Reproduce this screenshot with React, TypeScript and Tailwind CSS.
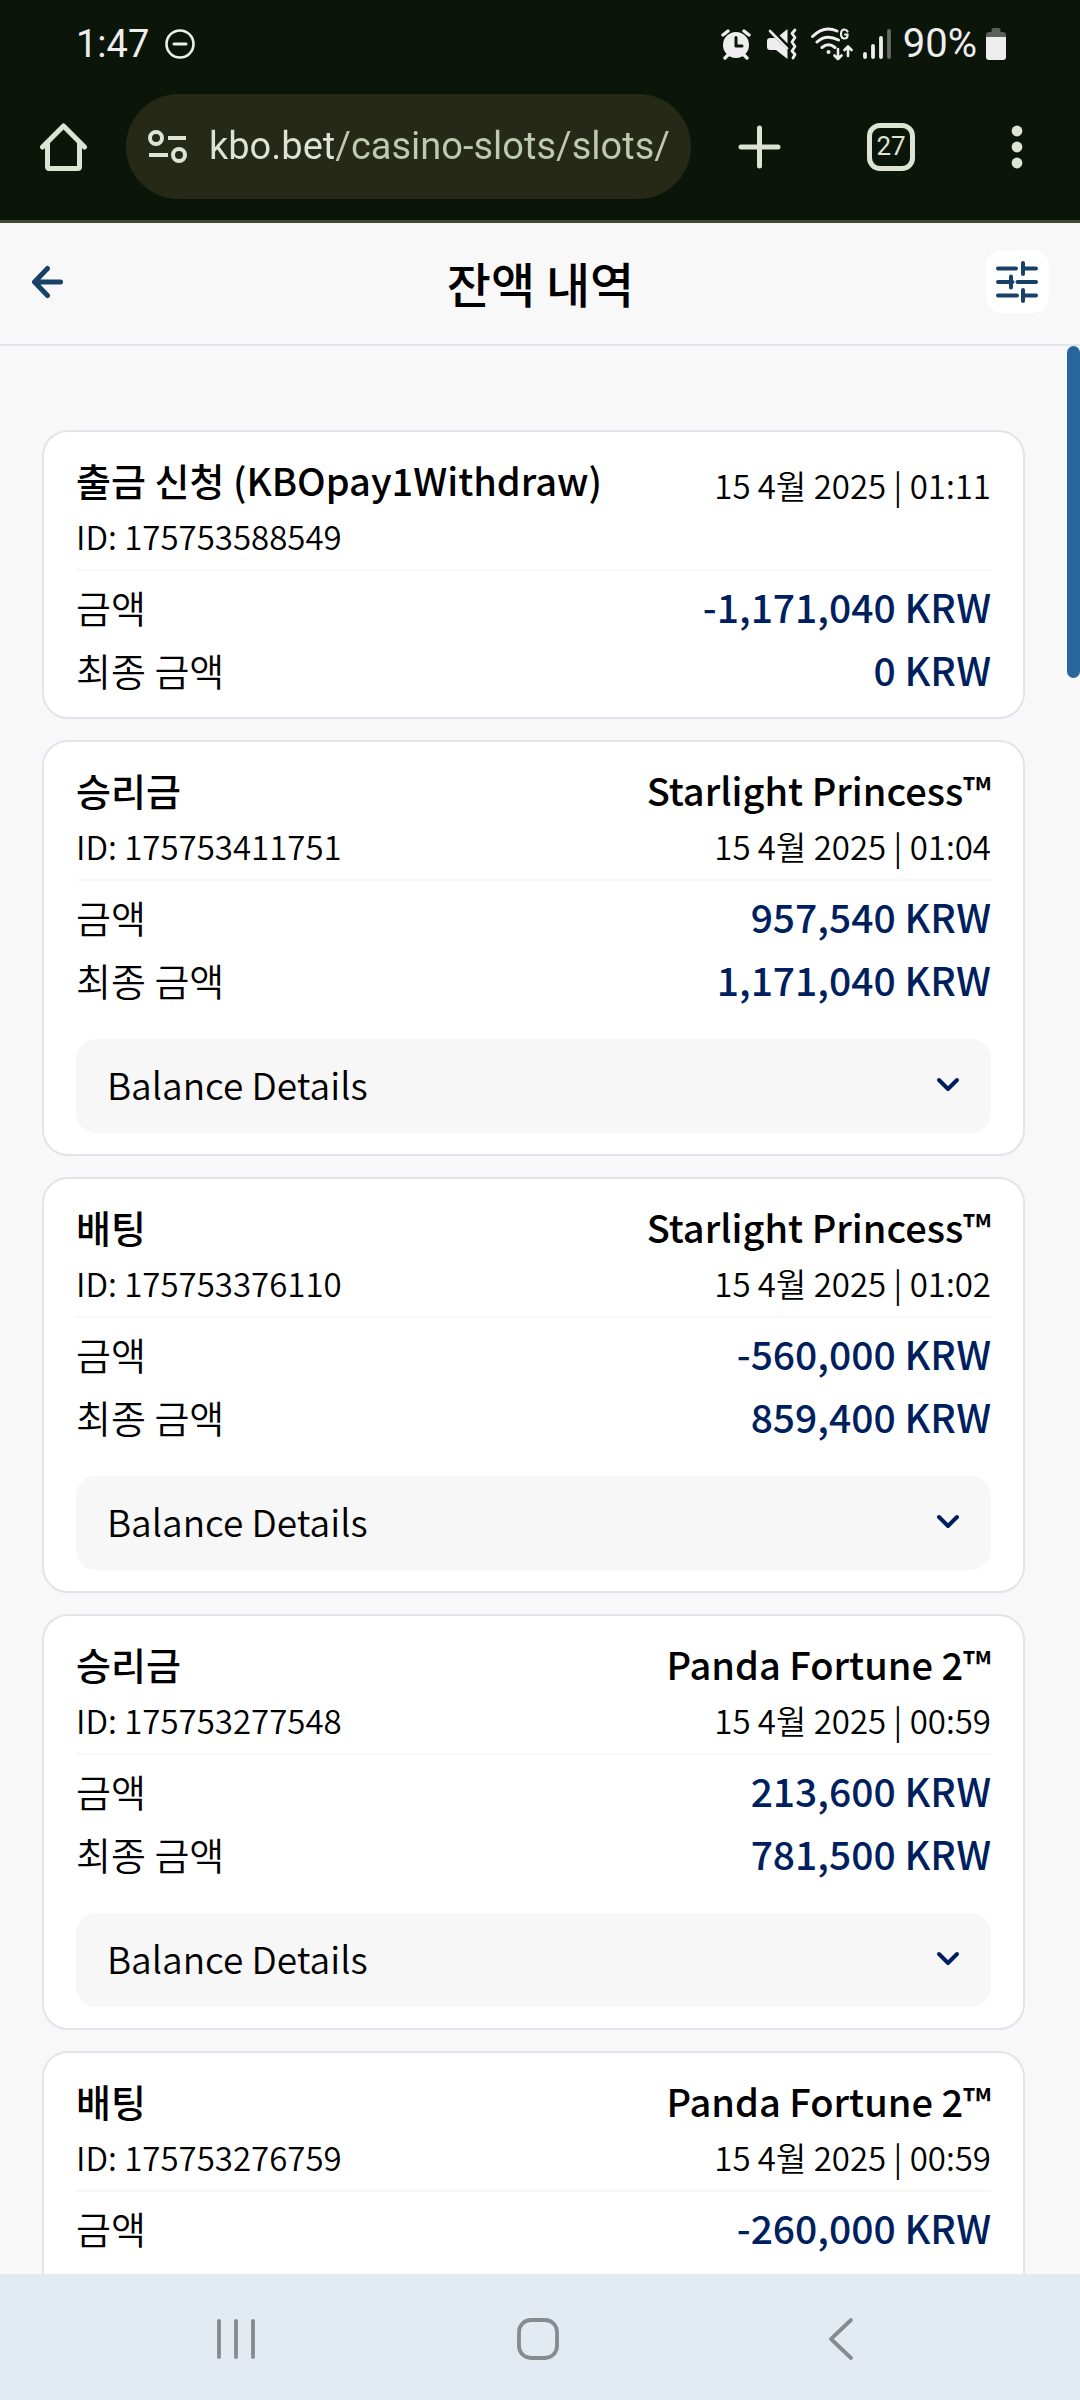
import { useState } from 'react';

interface Transaction {
  id: string;
  type: string;
  game?: string;
  date: string;
  amount: string;
  total: string;
  details: boolean;
}

const TRANSACTIONS: Transaction[] = [
  {
    id: '175753588549',
    type: '출금 신청 (KBOpay1Withdraw)',
    date: '15 4월 2025 | 01:11',
    amount: '-1,171,040 KRW',
    total: '0 KRW',
    details: false,
  },
  {
    id: '175753411751',
    type: '승리금',
    game: 'Starlight Princess™',
    date: '15 4월 2025 | 01:04',
    amount: '957,540 KRW',
    total: '1,171,040 KRW',
    details: true,
  },
  {
    id: '175753376110',
    type: '배팅',
    game: 'Starlight Princess™',
    date: '15 4월 2025 | 01:02',
    amount: '-560,000 KRW',
    total: '859,400 KRW',
    details: true,
  },
  {
    id: '175753277548',
    type: '승리금',
    game: 'Panda Fortune 2™',
    date: '15 4월 2025 | 00:59',
    amount: '213,600 KRW',
    total: '781,500 KRW',
    details: true,
  },
  {
    id: '175753276759',
    type: '배팅',
    game: 'Panda Fortune 2™',
    date: '15 4월 2025 | 00:59',
    amount: '-260,000 KRW',
    total: '',
    details: false,
  },
];

const StatusIcons = () => (
  <div className="flex items-center text-[#eeeeee]">
    {/* Alarm */}
    <svg width="30" height="32" viewBox="0 0 30 32" className="mr-4">
      <circle cx="15" cy="17" r="13" fill="currentColor" />
      <path
        d="M2 7 7 3M28 7 23 3M4 30l4-4M26 30l-4-4"
        stroke="currentColor"
        strokeWidth="3.4"
        strokeLinecap="round"
      />
      <path
        d="M15 9.5V18h6"
        fill="none"
        stroke="#0b1509"
        strokeWidth="3"
        strokeLinecap="round"
        strokeLinejoin="round"
      />
    </svg>
    {/* Muted, vibrate */}
    <svg width="30" height="32" viewBox="0 0 30 32" className="mr-3.5">
      <path
        d="M3 10h5l12.5 12.5V31L9 22H3q-3 0-3-3v-6q0-3 3-3ZM12.5 7.500 20.500 1v14.500Z"
        fill="currentColor"
      />
      <path
        d="M3 3 20 20.500"
        stroke="currentColor"
        strokeWidth="2.6"
        strokeLinecap="round"
      />
      <path
        d="m28 2-3 3.500 3 4-3 4.500 3 4.500-3 4.500 3 3.500-2 3.500"
        fill="none"
        stroke="currentColor"
        strokeWidth="2.8"
        strokeLinecap="round"
        strokeLinejoin="round"
      />
    </svg>
    {/* Wi-Fi with traffic arrows */}
    <svg width="42" height="34" viewBox="0 0 42 34" className="mr-2.5">
      <g
        fill="none"
        stroke="currentColor"
        strokeWidth="3"
        strokeLinecap="round"
      >
        <path d="M1.500 9.500Q13-2 26 4M6 15q9-8.500 21.500-2M11 20.500q6.500-5.500 13 0" />
        <path
          d="M27 22v10M23.500 28.500 27 32l3.500-3.500M37 29V19.500M33.500 23 37 19.500l3.500 3.500"
          strokeLinejoin="round"
          strokeWidth="2.6"
        />
        <path
          d="M36.500 4.500q-1-2-3-2-3.500 0-3.500 4.500t3.500 4.500q3 0 3-3V7.500H34"
          strokeWidth="2.2"
        />
      </g>
      <circle cx="17.5" cy="25" r="2" fill="currentColor" />
    </svg>
    {/* Signal */}
    <svg width="28" height="32" viewBox="0 0 28 32" className="mr-3">
      <g stroke="currentColor" strokeWidth="3.8" strokeLinecap="round">
        <path d="M2 26v3M10 18v11M18 10v19" />
        <path d="M26 3v26" opacity="0.4" />
      </g>
    </svg>
    <span className="font-[Roboto] text-[40px]">90%</span>
    {/* Battery */}
    <svg width="22" height="34" viewBox="0 0 22 34" className="ml-2">
      <path
        d="M1 10V8q0-3 3-3h2.500V3q0-2 2-2h5q2 0 2 2v2H18q3 0 3 3v2Z"
        fill="#5b6159"
      />
      <path d="M1 10h20v20q0 3-3 3H4q-3 0-3-3Z" fill="currentColor" />
    </svg>
  </div>
);

const BrowserBar = () => (
  <header className="border-b-3 border-[#434b38] bg-[#0b1509]">
    <div className="flex h-[94px] items-center justify-between pr-[73px] pb-1.5 pl-[76px]">
      <div className="flex items-center gap-4 text-[#eeeeee]">
        <span className="font-[Roboto] text-[38px]">1:47</span>
        <svg width="30" height="30" viewBox="0 0 30 30">
          <circle
            cx="15"
            cy="15"
            r="13.5"
            fill="none"
            stroke="currentColor"
            strokeWidth="2.6"
          />
          <path
            d="M9 15h12"
            stroke="currentColor"
            strokeWidth="3"
            strokeLinecap="round"
          />
        </svg>
      </div>
      <StatusIcons />
    </div>
    <div className="flex items-center pr-[45px] pb-[21px] pl-10 text-[#dde4d3]">
      <button type="button" aria-label="Home" className="mr-[38px]">
        <svg width="48" height="50" viewBox="0 0 48 50" fill="none">
          <path
            d="M2.500 25 23.500 4l21 21M7.500 21v23.500q0 2 2 2h28q2 0 2-2V21"
            stroke="currentColor"
            strokeWidth="5"
            strokeLinecap="round"
            strokeLinejoin="round"
          />
        </svg>
      </button>
      <label className="flex h-[105px] min-w-0 flex-1 items-center rounded-full bg-[#252915] pr-3 pl-[21px]">
        <svg
          width="42"
          height="36"
          viewBox="0 0 42 36"
          fill="none"
          stroke="currentColor"
          strokeWidth="4"
          className="mr-5 shrink-0"
        >
          <circle cx="9" cy="9" r="6" />
          <path d="M21 9h18M2 26h19" />
          <circle cx="32" cy="26" r="6" />
        </svg>
        {/* The host is brighter than the path */}
        <input
          type="text"
          aria-label="Address"
          defaultValue="kbo.bet/casino-slots/slots/"
          className="h-14 w-full min-w-0 bg-[linear-gradient(90deg,#dde4d3_126px,#bccbb0_126px)] bg-clip-text font-[Roboto] text-[38px] text-transparent outline-none"
        />
      </label>
      <button type="button" aria-label="New tab" className="mr-[86px] ml-[47px]">
        <svg width="43" height="44" viewBox="0 0 43 44">
          <path
            d="M21.500 3v38M3 22h37"
            stroke="currentColor"
            strokeWidth="5"
            strokeLinecap="round"
          />
        </svg>
      </button>
      <button
        type="button"
        aria-label="27 open tabs"
        className="mr-[84px] flex size-12 items-center justify-center rounded-[13px] border-5 border-current font-[Roboto] text-[26px]"
      >
        27
      </button>
      <button type="button" aria-label="Menu" className="px-3">
        <svg width="12" height="44" viewBox="0 0 12 44" fill="currentColor">
          <circle cx="6" cy="6" r="5.4" />
          <circle cx="6" cy="22" r="5.4" />
          <circle cx="6" cy="38" r="5.4" />
        </svg>
      </button>
    </div>
  </header>
);

const PageTitle = () => (
  <div className="flex h-[123px] items-center justify-between border-b-2 border-[#e1e4e8] pr-[31px] pb-1 pl-8">
    <button type="button" aria-label="Back" className="w-[63px] text-[#184168]">
      <svg width="32" height="34" viewBox="0 0 32 34" fill="none">
        <path
          d="M28.500 17H3M15.500 3.500 2.500 17l13 13.500"
          stroke="currentColor"
          strokeWidth="5"
          strokeLinecap="round"
          strokeLinejoin="round"
        />
      </svg>
    </button>
    <h1 className="text-[48px] font-medium">잔액 내역</h1>
    <button
      type="button"
      aria-label="Filter"
      className="flex size-[63px] items-center justify-center rounded-2xl bg-white text-[#184168]"
    >
      <svg width="42" height="42" viewBox="0 0 42 42" fill="none">
        <path
          d="M2 7.500h18M27 2v11M27 7.500h13M2 21h14.500M15 15.500v11M21.500 21H40M2 34.500h19M27 29v11M27 34.500h13"
          stroke="currentColor"
          strokeWidth="4"
          strokeLinecap="round"
        />
      </svg>
    </button>
  </div>
);

const TransactionCard = ({ item }: { item: Transaction }) => {
  const [open, setOpen] = useState(false);

  return (
    <article className="rounded-[26px] border-2 border-[#e1e4e8] bg-white px-8 pt-5 pb-4">
      <div className="flex justify-between border-b-2 border-[#f7f7f8] pb-2">
        <div>
          <h2 className="text-[38px] leading-[55px] font-medium">{item.type}</h2>
          <p className="pt-1 text-[33px] leading-[50px] font-[350]">
            ID: {item.id}
          </p>
        </div>
        <div className="text-right">
          {item.game && (
            <p className="text-[38px] leading-[55px] font-medium">{item.game}</p>
          )}
          <p
            className={
              item.game
                ? 'pt-1 text-[33px] leading-[50px] font-[350]'
                : 'pt-2 text-[33px] leading-[50px] font-[350]'
            }
          >
            {item.date}
          </p>
        </div>
      </div>
      <dl className="pt-1 leading-[63px]">
        <div className="flex justify-between">
          <dt className="text-[38px] font-[350]">금액</dt>
          <dd className="text-[39px] font-medium text-[#001f5f]">
            {item.amount}
          </dd>
        </div>
        {item.total && (
          <div className="flex justify-between">
            <dt className="text-[38px] font-[350]">최종 금액</dt>
            <dd className="text-[39px] font-medium text-[#001f5f]">
              {item.total}
            </dd>
          </div>
        )}
      </dl>
      {item.details && (
        <button
          type="button"
          aria-expanded={open}
          onClick={() => setOpen(!open)}
          className="mt-7 mb-[5px] flex h-[94px] w-full items-center justify-between rounded-[20px] bg-[#f7f7f8] px-[31px] pb-0.5 text-[37px] font-[350]"
        >
          Balance Details
          <svg width="24" height="16" viewBox="0 0 24 16" fill="none">
            <path
              d="m3 3 9 9 9-9"
              stroke="#001f5f"
              strokeWidth="4"
              strokeLinecap="round"
              strokeLinejoin="round"
            />
          </svg>
        </button>
      )}
    </article>
  );
};

const NavigationBar = () => (
  <nav className="flex h-[126px] items-center justify-between bg-[#e2eaf2] pt-1 pr-[226px] pl-[216px] text-[#868b8e]">
    <button type="button" aria-label="Recent apps">
      <svg width="40" height="42" viewBox="0 0 40 42">
        <path
          d="M3 3v36M20 3v36M37 3v36"
          stroke="currentColor"
          strokeWidth="3.8"
          strokeLinecap="round"
        />
      </svg>
    </button>
    <button type="button" aria-label="Home screen">
      <svg width="42" height="42" viewBox="0 0 42 42" fill="none">
        <rect
          x="2"
          y="2"
          width="38"
          height="38"
          rx="12"
          stroke="currentColor"
          strokeWidth="3.8"
        />
      </svg>
    </button>
    <button type="button" aria-label="Go back" className="pl-2">
      <svg width="26" height="44" viewBox="0 0 26 44" fill="none">
        <path
          d="M23 3 3 22l20 19"
          stroke="currentColor"
          strokeWidth="3.8"
          strokeLinecap="round"
          strokeLinejoin="round"
        />
      </svg>
    </button>
  </nav>
);

const App = () => (
  <div className="flex h-screen flex-col overflow-hidden bg-[#f8f8f8] font-['Noto_Sans_CJK_KR',sans-serif] text-black">
    <BrowserBar />
    <PageTitle />
    <div className="relative min-h-0 flex-1">
      <main className="flex h-full flex-col gap-[21px] overflow-y-auto pt-[84px] pr-[55px] pl-[42px] [scrollbar-width:none] *:shrink-0 *:last:rounded-b-none *:last:border-b-0 *:last:pb-16">
        {TRANSACTIONS.map((item) => (
          <TransactionCard key={item.id} item={item} />
        ))}
      </main>
      <div className="absolute top-0 right-0 h-[332px] w-[13px] rounded-full bg-[#28659c]" />
    </div>
    <NavigationBar />
  </div>
);

export default App;
